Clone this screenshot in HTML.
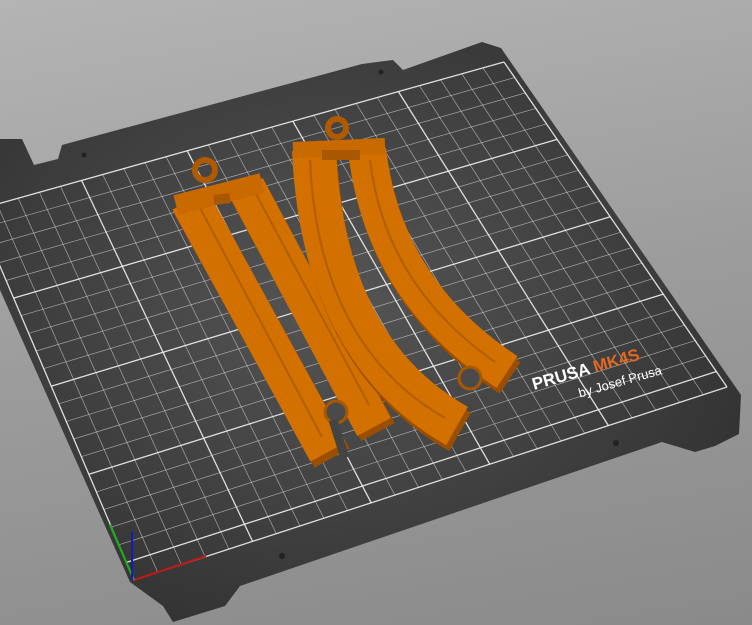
<!DOCTYPE html>
<html><head><meta charset="utf-8"><style>
html,body{margin:0;padding:0;width:752px;height:625px;overflow:hidden;}
body{background:linear-gradient(170deg,#b4b4b4 0%,#9c9c9c 50%,#8a8a8a 100%);}
svg{position:absolute;left:0;top:0;}
</style></head><body>
<svg width="752" height="625" viewBox="0 0 752 625" xmlns="http://www.w3.org/2000/svg">
<defs>
<radialGradient id="bg" cx="0.45" cy="0.45" r="0.6">
<stop offset="0" stop-color="#555"/><stop offset="1" stop-color="#333"/>
</radialGradient>
</defs>
<polygon fill="url(#bg)" points="0,139 22,139 34,165 58,159 62,145 362,64 393,60 403,70 482,42 501,48 741,395 739,434 715,446 695,452 662,442 240,586 225,606 173,622 163,606 130,582 0,290"/>
<g stroke="#e8e8e8" stroke-width="0.7" stroke-opacity="0.6">
<line x1="-2.9" y1="204.1" x2="157.7" y2="572.3"/><line x1="18.2" y1="198.2" x2="181.4" y2="564.6"/><line x1="39.4" y1="192.2" x2="205.2" y2="556.8"/><line x1="60.5" y1="186.3" x2="228.9" y2="549.1"/>
<line x1="102.7" y1="174.5" x2="276.3" y2="533.7"/><line x1="123.8" y1="168.6" x2="300" y2="526"/><line x1="145" y1="162.6" x2="323.8" y2="518.2"/><line x1="166.1" y1="156.7" x2="347.5" y2="510.5"/>
<line x1="208.3" y1="144.9" x2="394.9" y2="495.1"/><line x1="229.4" y1="139" x2="418.6" y2="487.4"/><line x1="250.6" y1="133" x2="442.4" y2="479.6"/><line x1="271.7" y1="127.1" x2="466.1" y2="471.9"/>
<line x1="313.9" y1="115.3" x2="513.5" y2="456.5"/><line x1="335" y1="109.4" x2="537.2" y2="448.8"/><line x1="356.2" y1="103.4" x2="561" y2="441"/><line x1="377.3" y1="97.5" x2="584.7" y2="433.3"/>
<line x1="419.5" y1="85.7" x2="632.1" y2="417.9"/><line x1="440.6" y1="79.8" x2="655.8" y2="410.2"/><line x1="461.8" y1="73.8" x2="679.6" y2="402.4"/><line x1="482.9" y1="67.9" x2="703.3" y2="394.7"/>
<line x1="-16.5" y1="227.6" x2="514.6" y2="77.5"/><line x1="-9" y1="245.2" x2="525.2" y2="93"/><line x1="-1.4" y1="262.9" x2="535.9" y2="108.4"/><line x1="6.1" y1="280.5" x2="546.5" y2="123.9"/>
<line x1="21.1" y1="315.7" x2="567.7" y2="154.9"/><line x1="28.7" y1="333.3" x2="578.3" y2="170.3"/><line x1="36.2" y1="351" x2="589" y2="185.8"/><line x1="43.7" y1="368.6" x2="599.6" y2="201.3"/>
<line x1="58.8" y1="403.8" x2="620.8" y2="232.2"/><line x1="66.3" y1="421.4" x2="631.4" y2="247.7"/><line x1="73.8" y1="439" x2="642" y2="263.2"/><line x1="81.3" y1="456.7" x2="652.7" y2="278.7"/>
<line x1="96.4" y1="491.9" x2="673.9" y2="309.6"/><line x1="103.9" y1="509.5" x2="684.5" y2="325.1"/><line x1="111.4" y1="527.1" x2="695.1" y2="340.6"/><line x1="119" y1="544.8" x2="705.8" y2="356"/>
</g>
<g stroke="#f0f0f0" stroke-width="1.3" stroke-opacity="0.9">
<line x1="-24" y1="210" x2="134" y2="580"/><line x1="81.6" y1="180.4" x2="252.6" y2="541.4"/><line x1="187.2" y1="150.8" x2="371.2" y2="502.8"/><line x1="292.8" y1="121.2" x2="489.8" y2="464.2"/><line x1="398.4" y1="91.6" x2="608.4" y2="425.6"/><line x1="504" y1="62" x2="727" y2="387"/>
<line x1="-24" y1="210" x2="504" y2="62"/><line x1="13.6" y1="298.1" x2="557.1" y2="139.4"/><line x1="51.2" y1="386.2" x2="610.2" y2="216.8"/><line x1="88.9" y1="474.3" x2="663.3" y2="294.1"/><line x1="126.5" y1="562.4" x2="716.4" y2="371.5"/><line x1="134" y1="580" x2="727" y2="387"/>
</g>
<line x1="134" y1="580" x2="206" y2="556" stroke="#c01818" stroke-width="2"/>
<line x1="134" y1="580" x2="110" y2="525" stroke="#18b018" stroke-width="2"/>
<line x1="132" y1="580" x2="132" y2="532" stroke="#1818c0" stroke-width="2"/>
<g transform="translate(534,390) rotate(-16)" font-family="Liberation Sans, sans-serif" font-weight="bold">
<text x="0" y="0" font-size="17" fill="#fff">PRUSA <tspan fill="#e06820">MK4S</tspan></text>
<text x="42" y="20" font-size="13" fill="#fff" font-weight="normal">by Josef Prusa</text>
</g>
<circle cx="282" cy="556" r="3" fill="#222"/><circle cx="616" cy="443" r="3" fill="#222"/>
<circle cx="84" cy="155" r="2.5" fill="#222"/><circle cx="381" cy="72" r="2.5" fill="#222"/>
<g fill="none">
<circle cx="205" cy="170" r="10" stroke="#b05a00" stroke-width="6"/>
<path d="M192,205 L332,458" stroke="#9a4e00" stroke-width="40"/>
<path d="M248,192 L378,432" stroke="#9a4e00" stroke-width="38"/>
<path d="M190,200 L328,452" stroke="#d27000" stroke-width="40"/>
<path d="M246,187 L374,427" stroke="#d27000" stroke-width="38"/>
<path d="M199,206 L322,437" stroke="#b05e00" stroke-width="2"/>
<path d="M256,194 L369,405" stroke="#b05e00" stroke-width="2"/>
<path d="M176,205 L262,183" stroke="#c86a00" stroke-width="20"/>
<path d="M214,200 L230,198" stroke="#a85800" stroke-width="10"/>
<circle cx="336" cy="412" r="11" fill="#4a4a4a" stroke="#a85800" stroke-width="3"/>
<path d="M333,420 L345,458" stroke="#444" stroke-width="9"/>
</g>
<g fill="none">
<circle cx="337" cy="128" r="9" stroke="#b05a00" stroke-width="6"/>
<path d="M315,155 Q325,355 460,432" stroke="#9a4e00" stroke-width="44"/>
<path d="M368,155 Q385,295 510,378" stroke="#9a4e00" stroke-width="38"/>
<path d="M314,150 Q323,350 457,426" stroke="#d27000" stroke-width="44"/>
<path d="M367,150 Q383,290 507,372" stroke="#d27000" stroke-width="38"/>
<path d="M310,160 Q318,345 445,418" stroke="#b05e00" stroke-width="2"/>
<path d="M370,160 Q385,285 495,362" stroke="#b05e00" stroke-width="2"/>
<path d="M293,150 L385,146" stroke="#c86a00" stroke-width="16"/>
<path d="M322,155 L360,155" stroke="#a85800" stroke-width="10"/>
<circle cx="470" cy="378" r="11" fill="#4a4a4a" stroke="#a85800" stroke-width="3"/>
</g>
</svg>
</body></html>
